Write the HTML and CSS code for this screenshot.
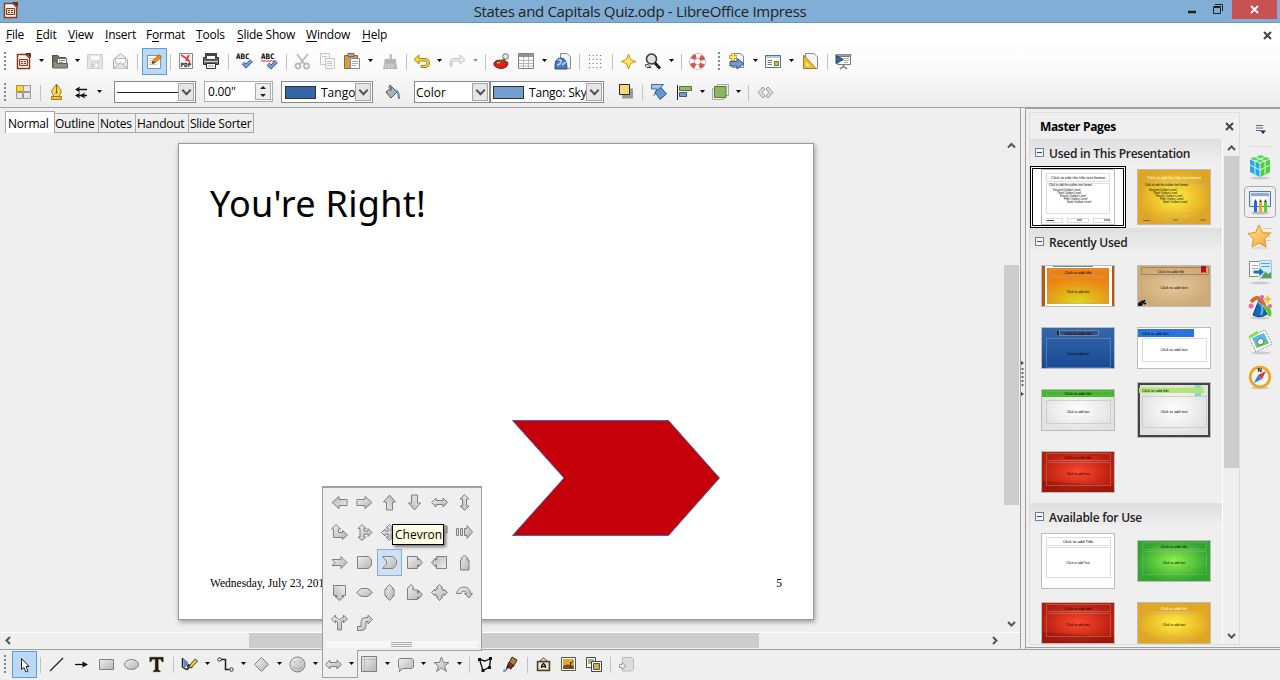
FILE: index.html
```html
<!DOCTYPE html>
<html lang="en">
<head>
<meta charset="utf-8">
<title>States and Capitals Quiz.odp - LibreOffice Impress</title>
<link rel="stylesheet" href="styles.css">
</head>
<body>
<svg class="defs" width="0" height="0">
  <defs>
    <linearGradient id="gg" x1="0" y1="0" x2="1" y2="1"><stop offset="0" stop-color="#f0f0f0"/><stop offset="1" stop-color="#b4b4b4"/></linearGradient>
    <radialGradient id="orange" cx=".5" cy=".95" r=".7"><stop offset="0" stop-color="#d8d820"/><stop offset="1" stop-color="#ee8010"/></radialGradient>
    <radialGradient id="yellow"><stop offset="0" stop-color="#ffee44"/><stop offset="1" stop-color="#e2a51c"/></radialGradient>
    <radialGradient id="red"><stop offset="0" stop-color="#fa4a30"/><stop offset="1" stop-color="#b81c0c"/></radialGradient>
    <radialGradient id="green"><stop offset="0" stop-color="#90f050"/><stop offset="1" stop-color="#2fa62e"/></radialGradient>
    <radialGradient id="tan"><stop offset="0" stop-color="#e2c79c"/><stop offset="1" stop-color="#cfab74"/></radialGradient>
    <linearGradient id="blue" x1="0" y1="0" x2="0" y2="1"><stop offset="0" stop-color="#3468ac"/><stop offset="1" stop-color="#174a92"/></linearGradient>
    <radialGradient id="pale"><stop offset="0" stop-color="#fff"/><stop offset="1" stop-color="#e2e2e2"/></radialGradient>
    <linearGradient id="gold" x1="0" y1="0" x2="1" y2="1"><stop offset="0" stop-color="#ffe79a"/><stop offset="1" stop-color="#f0a52a"/></linearGradient>
    <symbol id="arrow" viewBox="0 0 19 19"><path d="M2 6.500H10V3.500L17 9.500 10 15.500V12.500H2z"/></symbol>
    <symbol id="double" viewBox="0 0 19 19"><path d="M1.500 9.500L6 5V7.500H13V5L17.500 9.500 13 14V11.500H6V14z"/></symbol>
    <symbol id="callout" viewBox="0 0 19 19"><path d="M2.500 3.500H12.500V7H13.500V5L17.500 9.500 13.500 14V12H12.500V15.500H2.500z"/></symbol>
    <symbol id="odp" viewBox="0 0 19 19"><path d="M3.500 2.500H12L15.500 6V16.500H3.500z" fill="#fff" stroke="#8a3a1c" stroke-width="1.500"/><path d="M11 1H17V6z" fill="#7a2c10"/><path d="M5.500 7.500H13.500V13.500H5.500z" fill="#f3d9c8" stroke="#8a3a1c"/><path d="M7 9.500H9M10 9.500H12M7 11.500H9M10 11.500H12" stroke="#8a3a1c"/></symbol>
  </defs>
</svg>

<header class="titlebar">
  <svg class="appicon" width="19" height="19"><use href="#odp"/></svg>
  <h1>States and Capitals Quiz.odp - LibreOffice Impress</h1>
  <div class="winbtns">
    <svg width="68" height="19"><path d="M12 12H20" stroke="#222" stroke-width="2.500"/><path d="M37.500 7.500H44.500V13.500H37.500z" fill="none" stroke="#222"/><path d="M37 6.500H45M39 4.500H46.500V11" fill="none" stroke="#222"/></svg>
    <span class="close"><svg width="9" height="9"><path d="M1 1L8 8M8 1L1 8" stroke="#fff" stroke-width="1.800"/></svg></span>
  </div>
</header>

<section class="top">
  <nav class="menubar">
    <span style="width:30px"><u>F</u>ile</span><span style="width:32px"><u>E</u>dit</span><span style="width:37px"><u>V</u>iew</span><span style="width:41px"><u>I</u>nsert</span><span style="width:50px">F<u>o</u>rmat</span><span style="width:41px"><u>T</u>ools</span><span style="width:69px"><u>S</u>lide Show</span><span style="width:56px"><u>W</u>indow</span><span><u>H</u>elp</span>
    <svg class="docclose" width="9" height="9"><path d="M1 1L8 8M8 1L1 8" stroke="#444" stroke-width="2"/></svg>
  </nav>

  <div class="toolbar">
    <i class="grip"></i>
    <i class="b"><svg><use href="#odp"/></svg></i><i class="d"></i>
    <i class="b"><svg><path d="M2.500 3.500H8L9.500 5.500H15.500V15.500H2.500z" fill="#6b7265" stroke="#4c5148"/><path d="M7.500 6.500H16.500V13.500H7.500z" fill="#f4f4ee" stroke="#6b7265"/><path d="M9 8.500H15M9 10.500H13" stroke="#8b917f"/><path d="M3 16V9.500H6L7 11.500H17.500V16z" fill="#8c9482" stroke="#5d6457"/></svg></i><i class="d"></i>
    <i class="b dim"><svg><path d="M1.500 2.500H16.500V16.500H1.500z" fill="#e4e4e4" stroke="#c6c6c6"/><path d="M4 3H14V9H4z" fill="#fafafa" stroke="#d0d0d0"/><path d="M5.500 11H12.500V16H5.500z" fill="#f8f8f8" stroke="#c6c6c6"/><path d="M7.500 12V15" stroke="#bbb" stroke-width="2"/></svg></i>
    <i class="b"><svg><path d="M2.500 7.500L9.500 1.500 16.500 7.500V16.500H2.500z" fill="#eee" stroke="#aaa"/><path d="M4.500 6.500H14.500V10.500L9.500 13.500 4.500 10.500z" fill="#fff" stroke="#bbb"/><path d="M2.500 16.500L9.500 10.500 16.500 16.500" fill="#e3e3e3" stroke="#aaa"/></svg></i>
    <i class="s w9"></i>
    <i class="b on"><svg><path d="M2.500 3.500H15.500V16.500H2.500z" fill="#fff" stroke="#8a8f98"/><path d="M4 6.500H11M4 8.500H9M4 10.500H8M4 12.500H12" stroke="#c8c8c8"/><path d="M7 11.500L8 8.500 14 2.500 16.500 5 10 11z" fill="#f08a1c" stroke="#a85b14" stroke-width=".8"/><path d="M7 11.500L8 8.800 9.500 10.800z" fill="#333"/></svg></i>
    <i class="s w7"></i>
    <i class="b"><svg><path d="M2.500 1.500H15.500V16.500H2.500z" fill="#f8f8f8" stroke="#888"/><path d="M4 3Q10 6 13 10M12 3L9 9" fill="none" stroke="#e33" stroke-width="1.800"/><text x="3.500" y="15" class="pdf">PDF</text></svg></i>
    <i class="b"><svg><path d="M3 1H15V6H3z" fill="#444"/><path d="M1.500 5.500H16.500V12.500H1.500z" fill="#666" stroke="#333"/><path d="M4.500 3.500H13.500V7.500H4.500z" fill="#fff" stroke="#444"/><path d="M2 9.500H16" stroke="#cfcfcf"/><path d="M4.500 11.500H13.500V16.500H4.500z" fill="#fff" stroke="#333"/><path d="M6 14H12" stroke="#999"/></svg></i>
    <i class="s"></i>
    <i class="b"><svg><text x="1" y="7" class="abc">ABC</text><path d="M8 11L11 14 16.500 8.500" fill="none" stroke="#254f88" stroke-width="3.600"/><path d="M8 11L11 14 16.500 8.500" fill="none" stroke="#7ba4da" stroke-width="2"/></svg></i>
    <i class="b"><svg><text x="1" y="7" class="abc">ABC</text><path d="M1 9.500L2.500 8.500 4 9.500 5.500 8.500 7 9.500 8.500 8.500 10 9.500 11.500 8.500 13 9.500 14.500 8.500" fill="none" stroke="#e02020"/><path d="M8 12L11 15 16.500 9.500" fill="none" stroke="#254f88" stroke-width="3.600"/><path d="M8 12L11 15 16.500 9.500" fill="none" stroke="#7ba4da" stroke-width="2"/></svg></i>
    <i class="s"></i>
    <i class="b dim"><svg fill="none" stroke="#b0b0b0" stroke-width="1.800"><path d="M4 2L11.500 12M15 2L7 12"/><circle cx="5" cy="14" r="2.500"/><circle cx="13.500" cy="14" r="2.500"/></svg></i>
    <i class="b dim"><svg fill="#f7f7f7" stroke="#bcbcbc"><path d="M2.500 1.500H11.500V12.500H2.500z"/><path d="M7.500 6.500H16.500V16.500H7.500z"/><path d="M4 4.500H9M9 9.500H14M9 11.500H14M9 13.500H14"/></svg></i>
    <i class="b"><svg><path d="M1.500 3.500H14.500V16.500H1.500z" fill="#d49c52" stroke="#93662a"/><path d="M5 1.500H11V4.500H5z" fill="#aaa" stroke="#666"/><path d="M7.500 6.500H16.500V16.500H7.500z" fill="#fff" stroke="#888"/><path d="M9 9.500H15M9 11.500H15M9 13.500H13" stroke="#aaa"/></svg></i><i class="d"></i>
    <i class="b m2"><svg><path d="M8.500 2H11V7H8.500z" fill="#c0c0c0"/><path d="M4 7.500H14.500V10H4zM4 10L2.500 16.500H16L14.500 10z" fill="#bcbcbc" stroke="#aaa" stroke-width=".8"/><path d="M5 12V16M8 12V16M11 12V16" stroke="#ddd"/></svg></i>
    <i class="s w6"></i>
    <i class="b"><svg><path d="M7 3L2 7.500 7 12V9H13Q15 9 15 11T13 13.500H9V15.500H14Q17.500 15 17.500 11T13 6.500H7z" fill="#f6d64a" stroke="#a8820c"/></svg></i><i class="d"></i>
    <i class="b"><svg><path d="M12 3L17 7.500 12 12V9H6Q4 9 4 11V14H2V11Q2 6.500 6 6.500H12z" fill="#ececec" stroke="#c4c4c4"/></svg></i><i class="d grey"></i>
    <i class="s"></i>
    <i class="b"><svg><circle cx="13.500" cy="4.500" r="3" fill="#ccc" stroke="#888"/><circle cx="13.500" cy="4.500" r="1.200" fill="#fff"/><path d="M2 11Q4 7 8 8.500 11 7 16 10.500 16 16 9 16.500 1 15.500 2 11z" fill="#d8201c" stroke="#8b100e"/><path d="M7 8Q10 10 13 7" fill="none" stroke="#357a24" stroke-width="2"/><path d="M5 11Q7 10 8 11" stroke="#fff" fill="none"/></svg></i>
    <i class="b"><svg><path d="M1.500 1.500H16.500V16.500H1.500z" fill="#fff" stroke="#80857a"/><path d="M2 2H16V5H2z" fill="#90968a"/><path d="M2 8.500H16M2 11.500H16M2 14H16M6.500 5V16M11.500 5V16" stroke="#b4b8ae"/></svg></i><i class="d"></i>
    <i class="b"><svg><path d="M7.500 1.500H14L17.500 5V16.500H7.500z" fill="#f5f5f5" stroke="#888"/><path d="M2 17Q1 6 8 6 14 6 14 17z" fill="#4b7ab6" stroke="#244f85"/><path d="M5 8Q9 7 8 10T4 13M9 13L13 10" fill="none" stroke="#a9c9ec" stroke-width="1.800"/></svg></i>
    <i class="s"></i>
    <i class="b"><svg><path d="M3 3.500H17M3 7.500H17M3 11.500H17M3 15.500H17" stroke="#666" stroke-dasharray="1 2.700"/></svg></i>
    <i class="s"></i>
    <i class="b"><svg><path d="M9.500 2L11.500 7.500 17 9.500 11.500 11.500 9.500 17 7.500 11.500 2 9.500 7.500 7.500z" fill="#ffe566" stroke="#c09a10"/></svg></i>
    <i class="b"><svg><circle cx="7.500" cy="7" r="5" fill="#dce4ea" stroke="#333" stroke-width="1.500"/><path d="M11 11L16 16.500" stroke="#222" stroke-width="3"/><path d="M1 13Q4 11 7 15.500H3z" fill="#eee" stroke="#333"/></svg></i><i class="d"></i>
    <i class="s"></i>
    <i class="b"><svg fill="none"><circle cx="9.500" cy="9.500" r="5.500" stroke="#999" stroke-width="5.500"/><circle cx="9.500" cy="9.500" r="5.500" stroke="#fff" stroke-width="4.400"/><circle cx="9.500" cy="9.500" r="5.500" stroke="#e05048" stroke-width="4.500" stroke-dasharray="4.320 4.320" stroke-dashoffset="-2.160"/></svg></i>
    <i class="grip mid"></i>
    <i class="b"><svg><path d="M4.500 1.500H12L15.500 4V15.500H4.500z" fill="#f4f4f4" stroke="#888"/><path d="M2 9.500H9V6.500L16 11.500 9 17V14H2z" fill="#6f9bd0" stroke="#2c578c"/><path d="M5 1V9M1 5H9" stroke="#b18d0a" stroke-width="3.600"/><path d="M5 1.500V8.500M1.500 5H8.500" stroke="#ffe766" stroke-width="2"/></svg></i><i class="d"></i>
    <i class="b"><svg><path d="M1.500 3.500H16.500V15.500H1.500z" fill="#fff" stroke="#4973a6"/><path d="M2 4H16V6H2z" fill="#b7cbe3"/><path d="M3.500 8.500H8M3.500 10.500H8M3.500 12.500H8" stroke="#777"/><path d="M10.500 9.500H14.500V13.500H10.500z" fill="#c5c34c" stroke="#71711c"/></svg></i><i class="d"></i>
    <i class="b m1"><svg><path d="M4.500 1.500H13L16.500 5V16.500H4.500z" fill="#f5f5f5" stroke="#888"/><path d="M2.500 3L15 16.500H2.500z" fill="#eebc35" stroke="#a87e12"/><path d="M5 10L9 14H5z" fill="#fff0b8"/></svg></i>
    <i class="s"></i>
    <i class="b"><svg><path d="M2 2.500H17V4H2z" fill="#bbb" stroke="#777" stroke-width=".8"/><path d="M3.500 4.500H16.500V12.500H3.500z" fill="#fff" stroke="#777"/><path d="M10 6.500H15M10 8.500H15M10 10.500H14" stroke="#aaa"/><path d="M2 3.500L9.500 7.500 2 11.500z" fill="#37659f" stroke="#234a7c"/><path d="M9.500 13V15M6 17L9.500 14.500 13 17" fill="none" stroke="#777" stroke-width="1.500"/></svg></i>
  </div>

  <div class="toolbar second">
    <i class="grip"></i>
    <i class="b"><svg stroke="#999"><path d="M2.500 2.500H9.500V8.500H2.500z" fill="#f5d742" stroke="#b19312"/><path d="M9.500 2.500H16.500V8.500H9.500zM2.500 9.500H8.500V15.500H2.500zM9.500 9.500H16.500V15.500H9.500z" fill="#e6e6e6"/></svg></i>
    <i class="s"></i>
    <i class="b"><svg><path d="M9.500 1L14.500 8 12 14H7L4.500 8z" fill="#f8d954" stroke="#a7800f"/><path d="M9.500 2V9" stroke="#7a5e0c"/><circle cx="9.500" cy="9.500" r="1" fill="#554"/><path d="M4.500 13.500H14.500V16.500H4.500z" fill="#f0c53a" stroke="#9c7a16"/></svg></i>
    <i class="b"><svg><path d="M5 6.500H15M5 12.500H15" stroke="#111" stroke-width="1.300"/><path d="M3 6.500L8 3.500 7 6.500 8 9.500zM3 12.500L8 9.500 7 12.500 8 15.500zM8 12.500L13 9.500 12 12.500 13 15.500z" fill="#111"/></svg></i><i class="d"></i>
    <div class="combo line"><span class="rule"></span><b></b></div>
    <div class="spin"><span>0.00"</span><b></b></div>
    <div class="combo fill1"><em></em><span>Tango: Blue</span><b></b></div>
    <i class="b bucket"><svg><path d="M3 9L9 4 14 9 8 15z" fill="#aeb3b2" stroke="#4d5453"/><path d="M8 8V2.500Q6 1 6 5" fill="none" stroke="#555"/><path d="M11 7Q16 7 16 16" fill="none" stroke="#688dc0" stroke-width="2.200"/></svg></i>
    <div class="combo kind"><span>Color</span><b></b></div>
    <div class="combo fill2"><em></em><span>Tango: Sky Blue</span><b></b></div>
    <i class="b shadow"><svg><path d="M6 5.500H17V15.500H6z" fill="#999"/><path d="M3.500 1.500H13.500V11.500H3.500z" fill="#f5d77c" stroke="#332b14"/></svg></i>
    <i class="s w9"></i>
    <i class="b"><svg><path d="M1.500 1.500H13.500L4 12.500 7 6H1.500z" fill="#a9c3e2" stroke="#3d6da5"/><path d="M5 9L11 4.500 16.500 11 10 16.500z" fill="#6794cd" stroke="#2a5894"/></svg></i>
    <i class="b"><svg><path d="M2.500 2V17" stroke="#222"/><path d="M4.500 3.500H16.500V7.500H4.500z" fill="#90b86a" stroke="#4e7a2e"/><path d="M4.500 9.500H11.500V13.500H4.500z" fill="#8099b8" stroke="#39577c"/></svg></i><i class="d"></i>
    <i class="b"><svg><path d="M6.500 1.500H17.500V12.500H6.500z" fill="#eee" stroke="#aaa"/><path d="M1.500 5.500H12.500V16.500H1.500z" fill="#eee" stroke="#aaa"/><path d="M3.500 3.500H15V14.500H3.500z" fill="#8cb565" stroke="#517e30"/></svg></i><i class="d"></i>
    <i class="s w9"></i>
    <i class="b"><svg fill="#ddd" stroke="#999"><path d="M7 4L2 9.500 7 15 9 13 6 9.500 9 6z"/><path d="M12 4L17 9.500 12 15 10 13 13 9.500 10 6z"/></svg></i>
  </div>
</section>

<main class="main">
  <section class="work">
    <div class="tabs"><span class="active">Normal</span><span style="width:44px">Outline</span><span style="width:37px">Notes</span><span style="width:53px">Handout</span><span style="width:65px">Slide Sorter</span></div>
    <div class="canvasrow">
      <div class="canvas">
        <article class="slide">
          <h2>You're Right!</h2>
          <svg class="shape" width="210" height="118"><path d="M.5 1.500H156.500L207.500 59 156.500 116.500H.5L52 59z" fill="#c5000b" stroke="#4a6698"/></svg>
          <footer><span>Wednesday, July 23, 2014</span><span>5</span></footer>
        </article>
      </div>
      <div class="vscroll"><svg width="15" height="16"><path d="M4 10.500L7.500 7 11 10.500" class="chev"/></svg><i></i><svg width="15" height="16"><path d="M4 6L7.500 9.500 11 6" class="chev"/></svg></div>
    </div>
    <div class="hscroll"><svg width="16" height="15"><path d="M10 4L6.500 7.500 10 11" class="chev"/></svg><i></i><svg width="16" height="15"><path d="M6 4L9.500 7.500 6 11" class="chev"/></svg></div>
  </section>

  <div class="splitter"><svg width="4" height="38"><path d="M0 1L3 3 0 5zM0 32L3 34 0 36z" fill="#444"/><path d="M1.500 8V28" stroke="#666" stroke-width="2" stroke-dasharray="2 2"/></svg></div>

  <aside class="sidebar">
    <div class="panel">
      <div class="phead"><b>Master Pages</b><svg width="9" height="9"><path d="M1 1L8 8M8 1L1 8" stroke="#444" stroke-width="2"/></svg></div>
      <div class="pbody">
        <div class="lists">
          <h3><i></i>Used in This Presentation</h3>
          <div class="used">
            <div class="pick"><svg class="th" viewBox="0 0 74 56" height="56"><rect width="74" height="56" fill="#fff"/><g class="fr"><path d="M5.500 4.500H68.500V12.500H5.500zM5.500 14.500H68.500V44.500H5.500zM5.500 49.500H21.500V53.500H5.500zM26.500 49.500H47.500V53.500H26.500zM52.500 49.500H68.500V53.500H52.500z"/></g><text x="10" y="10" textLength="54">Click to edit the title text format</text><g class="o"><text x="8" y="17" textLength="43">Click to edit the outline text format</text><text x="12" y="21.500">Second Outline Level</text><text x="16" y="25">Third Outline Level</text><text x="19" y="28">Fourth Outline Level</text><text x="23" y="31">Fifth Outline Level</text><text x="26" y="34">Sixth Outline Level</text></g><path d="M6 51.500H13M36 51H41M63 51H69" stroke="#444"/></svg></div>
            <svg class="th" viewBox="0 0 74 56" height="56"><rect width="74" height="56" fill="url(#yellow)"/><g class="fr"><path d="M5.500 4.500H68.500V12.500H5.500zM5.500 14.500H68.500V44.500H5.500zM5.500 49.500H21.500V53.500H5.500zM26.500 49.500H47.500V53.500H26.500zM52.500 49.500H68.500V53.500H52.500z"/></g><text x="10" y="10" fill="#fff" textLength="54">Click to edit the title text format</text><g class="o"><text x="8" y="17" textLength="43">Click to edit the outline text format</text><text x="12" y="21.500">Second Outline Level</text><text x="16" y="25">Third Outline Level</text><text x="19" y="28">Fourth Outline Level</text><text x="23" y="31">Fifth Outline Level</text><text x="26" y="34">Sixth Outline Level</text></g><path d="M6 51.500H13M36 51H41M63 51H69" stroke="#764"/></svg>
          </div>
          <h3><i></i>Recently Used</h3>
          <div class="grid recent">
            <svg class="th" viewBox="0 0 74 42" height="42"><rect width="74" height="42" fill="#b45a14"/><rect x="4" y="1" width="67" height="40" fill="#fff"/><path d="M12 1H52" stroke="#5699a5" stroke-width="2"/><rect x="6" y="3" width="62" height="36" fill="url(#orange)"/><path class="fr" d="M8.500 4.500H65.500V10.500H8.500zM8.500 12.500H65.500V38.500H8.500z"/><text x="37" y="8.500" class="c">Click to add title</text><text x="37" y="28" class="c s">Click to add text</text></svg>
            <svg class="th" viewBox="0 0 74 42" height="42"><rect width="74" height="42" fill="url(#tan)"/><path d="M4.500 2.500H71.500V9.500H4.500z" fill="none" stroke="#a67d65"/><path class="fr" d="M4.500 11.500H71.500V34.500H4.500z"/><path d="M64 1H69V8L66.500 7 64 8z" fill="#b80e22"/><path d="M1 39.500L3 37.500 5 39.500 3 41zM4 36L6 38 8 35M7 39L9 38" fill="#101020" stroke="#101020" stroke-width="1.500"/><text x="34" y="7.500" class="c">Click to add title</text><text x="37" y="24" class="c">Click to add text</text></svg>
            <svg class="th" viewBox="0 0 74 42" height="42"><rect width="74" height="42" fill="url(#blue)"/><path d="M18.500 3.500H57.500V8.500H18.500z" fill="#35507b" stroke="#6b84a8"/><path d="M16 4H18V8H16z" fill="#162845"/><path class="fr" d="M5.500 11.500H69.500V40.500H5.500z"/><text x="37" y="7.500" class="c">Click to add title</text><text x="37" y="28" class="c s">Click to add text</text></svg>
            <svg class="th" viewBox="0 0 74 42" height="42"><rect width="74" height="42" fill="#fff"/><rect y="2" width="57" height="8" fill="#2d73dc"/><path class="fr" d="M5.500 11.500H69.500V34.500H5.500z"/><text x="5" y="7.500">Click to add title</text><text x="37" y="24" class="c">Click to add text</text></svg>
            <svg class="th" viewBox="0 0 74 42" height="42"><rect width="74" height="42" fill="url(#pale)"/><rect width="74" height="8" fill="#40b827"/><path class="fr" d="M5.500 2.500H69.500V6.500H5.500zM5.500 11.500H69.500V34.500H5.500z"/><text x="37" y="6" class="c">Click to add title</text><text x="37" y="24" class="c s">Click to add text</text></svg>
            <svg class="th" viewBox="0 0 74 56" height="56"><rect x="1.500" y="1.500" width="71" height="53" fill="url(#pale)" stroke="#444" stroke-width="3"/><rect x="58" y="3" width="6" height="11" fill="#83d2dc"/><rect x="2" y="5.500" width="65" height="5.500" fill="#b2e575"/><path class="fr" d="M5.500 14.500H69.500V45.500H5.500z"/><text x="5" y="9.500">Click to add title</text><text x="37" y="31" class="c">Click to add text</text></svg>
            <svg class="th" viewBox="0 0 74 42" height="42"><rect width="74" height="42" fill="url(#red)"/><path d="M0 30L74 35V42H0z" fill="#841408" opacity=".45"/><path class="fr" d="M5.500 2.500H69.500V9.500H5.500zM5.500 11.500H69.500V34.500H5.500z"/><text x="37" y="7.500" class="c">Click to add title</text><text x="37" y="24" class="c s">Click to add text</text></svg>
          </div>
          <h3><i></i>Available for Use</h3>
          <div class="grid avail">
            <svg class="th" viewBox="0 0 74 56" height="56"><rect width="74" height="56" fill="#fff"/><path class="fr" d="M5.500 4.500H69.500V12.500H5.500zM5.500 14.500H69.500V44.500H5.500z"/><text x="37" y="10" class="c big">Click to add Title</text><text x="37" y="31" class="c s">Click to add Text</text></svg>
            <svg class="th" viewBox="0 0 74 42" height="42"><rect width="74" height="42" fill="url(#green)"/><path class="fr" d="M5.500 2.500H69.500V9.500H5.500zM5.500 11.500H69.500V34.500H5.500z"/><text x="37" y="7.500" class="c">Click to add title</text><text x="37" y="24" class="c s">Click to add text</text></svg>
            <svg class="th" viewBox="0 0 74 42" height="42"><rect width="74" height="42" fill="url(#red)"/><path d="M0 30L74 35V42H0z" fill="#841408" opacity=".45"/><path class="fr" d="M5.500 2.500H69.500V9.500H5.500zM5.500 11.500H69.500V34.500H5.500z"/><text x="37" y="7.500" class="c">Click to add title</text><text x="37" y="24" class="c s">Click to add text</text></svg>
            <svg class="th" viewBox="0 0 74 42" height="42"><rect width="74" height="42" fill="url(#yellow)"/><rect x="5" y="2" width="64" height="7" fill="#e8a816"/><path class="fr" d="M5.500 2.500H69.500V9.500H5.500zM5.500 11.500H69.500V34.500H5.500z"/><text x="37" y="7.500" class="c" fill="#fff">Click to add title</text><text x="37" y="24" class="c s">Click to add text</text></svg>
          </div>
        </div>
        <div class="pscroll"><svg width="15" height="17"><path d="M4 11L7.500 7.500 11 11" class="chev"/></svg><i></i><svg width="15" height="16"><path d="M4 6L7.500 9.500 11 6" class="chev"/></svg></div>
      </div>
    </div>
    <div class="deck">
      <svg class="menuicon" width="12" height="12"><path d="M1 1.500H8M1 4H8M1 6.500H6" stroke="#58688a"/><path d="M5 6.500H11L8 10z" fill="#182b50"/></svg>
      <hr>
      <span><svg><ellipse cx="15" cy="26" rx="10" ry="1.500" fill="#ccc"/><path d="M15 3L25 7V20L15 25 5 20V7z" fill="#24a7ef"/><path d="M15 3L25 7 15 11 5 7z" fill="#58d848"/><path d="M15 11L25 7V20L15 25z" fill="#4dd03a"/><path d="M15 3L10 5 20 9V22M5 13L15 18 25 13M10 9V22M20 5L10 9M15 11V25M5 7L15 11 25 7" stroke="#eafaff" fill="none" stroke-width=".9"/></svg></span>
      <span class="sel"><svg><ellipse cx="15" cy="26" rx="9" ry="1.500" fill="#bbb"/><path d="M4.500 4.500H25.500V19.500H4.500z" fill="#dce9f8" stroke="#5576ac"/><path d="M6 6H24V9H6z" fill="#8fa9d2"/><path d="M7 10H23V18H7z" fill="#fff"/><path d="M10.500 15V25" stroke="#2166dd" stroke-width="3"/><path d="M15.500 15V25" stroke="#f5a416" stroke-width="3"/><path d="M20.500 15V25" stroke="#55d12a" stroke-width="3"/><path d="M9 15L10.500 12 12 15M14 15L15.500 12 17 15M19 15L20.500 12 22 15" fill="#444"/></svg></span>
      <span><svg><ellipse cx="15" cy="26" rx="9" ry="1.500" fill="#ddd"/><path d="M18 6.500H27M20 10.500H27M20 14.500H26M20 18.500H26" stroke="#f1c583"/><path d="M14 3L17.500 10.500 25 11.500 19.500 17 21 25 14 21 7 25 8.500 17 3 11.500 10.500 10.500z" fill="url(#gold)" stroke="#dc9228"/></svg></span>
      <span><svg><ellipse cx="15" cy="26" rx="10" ry="1.500" fill="#ccc"/><path d="M4.500 4.500H14.500V19.500H4.500z" fill="#fff" stroke="#888"/><path d="M7 8.500H13M7 11.500H13" stroke="#aaa"/><path d="M14.500 3.500H26.500V21.500H14.500z" fill="#d5ebff" stroke="#9fc4e8"/><path d="M16 21L20 14 23 17 26 15V21z" fill="#5d9f4c"/><path d="M16 6.500H25M16 9.500H25" stroke="#59a0df"/><path d="M8 13H14V9.500L19.500 15 14 20.500V17H8z" fill="#1475c4" stroke="#fff"/></svg></span>
      <span><svg><ellipse cx="15" cy="26" rx="10" ry="1.500" fill="#ccc"/><path d="M8 23L14 8 22 22Q15 27 8 23z" fill="#1467b8" stroke="#0a4076"/><path d="M13 10Q20 14 16 23" stroke="#62b4f0" stroke-width="2" fill="none"/><path d="M6 10Q12 3 16 8T19 14" fill="none" stroke="#df6a26" stroke-width="4"/><path d="M19 15Q26 17 24 24" stroke="#60c834" stroke-width="4" fill="none"/><path d="M23 3L24 6 27 7 24 9 23 12 21 9 18 7 21 6z" fill="#fabd30"/><circle cx="6" cy="14" r="2.500" fill="#f265bb"/><circle cx="17" cy="5" r="2" fill="#c964dc"/><circle cx="25" cy="14" r="2" fill="#ef64a0"/></svg></span>
      <span><svg><ellipse cx="16" cy="26" rx="10" ry="1.500" fill="#ccc"/><path d="M4 10L20 3 27 17 11 25z" fill="#fff" stroke="#999" stroke-dasharray="2 1"/><path d="M7 11L19 6 24 16 12 21z" fill="#53b9ee"/><path d="M10 18L15 12 18 16 21 13 24 16 12 21z" fill="#78c83c"/><path d="M12 15L15 11 19 13 18 17 14 18z" fill="#f6f6f6" stroke="#468" stroke-width=".8"/><path d="M5 10L13 5" stroke="#83e63c" stroke-width="3"/></svg></span>
      <span><svg><ellipse cx="15" cy="26" rx="9" ry="1.500" fill="#ccc"/><circle cx="15" cy="15" r="9.800" fill="#eef4f8" stroke="#f1a51e" stroke-width="2.800"/><path d="M21 9L17 17 13 13z" fill="#e52e2e"/><path d="M9 21L13 13 17 17z" fill="#2e83df"/><text x="12.500" y="10" class="north">N</text></svg></span>
    </div>
  </aside>
</main>

<footer class="toolbar bottom">
  <i class="grip"></i>
  <i class="b on m1"><svg><path d="M6.500 3.500V14.500L9 12.500 11 17 13 16 11 11.500H14z" fill="#fff" stroke="#222"/></svg></i>
  <i class="s w7"></i>
  <i class="b"><svg><path d="M3 16L16 3" stroke="#222" stroke-width="1.200"/></svg></i>
  <i class="b"><svg><path d="M3 9.500H12" stroke="#111" stroke-width="1.300"/><path d="M10.500 6.500L16 9.500 10.500 12.500z" fill="#111"/></svg></i>
  <i class="b g"><svg><path d="M2.500 4.500H16.500V14.500H2.500z"/></svg></i>
  <i class="b g"><svg><ellipse cx="9.500" cy="9.500" rx="7" ry="5"/></svg></i>
  <i class="b"><svg><path d="M2.500 2H16.500V7H15L13.500 4.500H11.500V14.500L13.500 16V17H6V16L8 14.500V4.500H5.500L4 7H2.500z" fill="#1c1c1c" stroke="#b99d50" stroke-width=".5"/></svg></i>
  <i class="s"></i>
  <i class="b"><svg><path d="M2.500 3V12Q9 17 8 12T12 13" fill="none" stroke="#222" stroke-width="1.500"/><path d="M3 3L8 7V10L4 13z" fill="#5f90b5"/><path d="M9 13L10 10 15 4 17.500 6 12 12z" fill="#f3c84d" stroke="#5a4415"/></svg></i><i class="d"></i>
  <i class="b"><svg fill="none" stroke="#222"><path d="M5 4.500H9.500V14.500H13.500" stroke-width="1.500"/><circle cx="3.500" cy="4.500" r="1.700" fill="#fff"/><circle cx="15.500" cy="14.500" r="1.700" fill="#fff"/></svg></i><i class="d"></i>
  <i class="b g"><svg><path d="M9.500 2.500L16.500 9.500 9.500 16.500 2.500 9.500z"/></svg></i><i class="d"></i>
  <i class="b g"><svg><circle cx="9.500" cy="9.500" r="7.500"/><path d="M6.500 6V8M12.500 6V8M5 11.500Q9.500 16 14 11.500" fill="none" stroke="#aaa"/></svg></i><i class="d"></i>
  <div class="opened">
    <i class="b g"><svg><use href="#double"/></svg></i><i class="d"></i>
    <div class="popup">
      <div class="shapes g">
        <svg><use href="#arrow" transform="rotate(180 9.500 9.500)"/></svg>
        <svg><use href="#arrow"/></svg>
        <svg><use href="#arrow" transform="rotate(-90 9.500 9.500)"/></svg>
        <svg><use href="#arrow" transform="rotate(90 9.500 9.500)"/></svg>
        <svg><use href="#double"/></svg>
        <svg><use href="#double" transform="rotate(90 9.500 9.500)"/></svg>
        <svg><path d="M6 1.500L10.500 6H8.500V9.500H12.500V7.500L17.500 12 12.500 16.500V14.500H3.500V6H1.500z"/></svg>
        <svg><path d="M7 1.500L11 5.500H9V8H13V5.500L17 9.500 13 13.500V11H9V14H11L7 17.500 3 14H5V5.500H3z"/></svg>
        <svg><path d="M9.500 1.500L13 5H11V8H14V6L17.500 9.500 14 13V11H11V14H13L9.500 17.500 6 14H8V11H5V13L1.500 9.500 5 6V8H8V5H6z"/></svg>
        <svg><path d="M2 12H8V6H6L9.500 2 13 6H11V15H2z"/></svg>
        <svg><path d="M3 3H17V10H9V14L3 9z"/></svg>
        <svg><path d="M1.500 5.500H3.500V12.500H1.500zM5.500 5.500H7.500V12.500H5.500zM9.500 5.500H12V2.500L17.500 9 12 15.500V12.500H9.500z"/></svg>
        <svg><path d="M2 6.500H11V3.500L17 9.500 11 15.500V12.500H2L5 9.500z"/></svg>
        <svg><path d="M2.500 3.500H13.500L16.500 7V12L13.500 15.500H2.500z"/></svg>
        <svg class="hot"><path d="M2.500 3.500H13L16.500 7.500V11.500L13 15.500H2.500L6.500 11V8z"/></svg>
        <svg><use href="#callout"/></svg>
        <svg><use href="#callout" transform="rotate(180 9.500 9.500)"/></svg>
        <svg><path d="M5.500 17V7H7V5.500H6L9.500 2 13 5.500H12V7H14V17z"/></svg>
        <svg><use href="#callout" transform="rotate(90 9.500 9.500)"/></svg>
        <svg><path d="M1.500 9.500L5 6.500V7L6 5.500H13L14 7V6.500L17.500 9.500 14 12.500V12L13 13.500H6L5 12V12.500z"/></svg>
        <svg><path d="M9.500 1.500L12.500 4.500V6H14V13H12.500V14.500L9.500 17.500 6.500 14.500V13H5V6H6.500V4.500z"/></svg>
        <svg><path d="M6 1.500L9 5H8V7H12.500V10H13.500V7.500L17.500 11.500 13.500 16V14H12.500V16.500H2.500V5H3z"/></svg>
        <svg><path d="M9.500 1.500L12.500 4.500H11.500V6H13V7.500H14.500V6.500L17.500 9.500 14.500 12.500V11.500H13V13H11.500V14.500H12.500L9.500 17.500 6.500 14.500H7.500V13H6V11.500H4.500V12.500L1.500 9.500 4.500 6.500V7.500H6V6H7.500V4.500H6.500z"/></svg>
        <svg><path d="M1.500 10.500Q3 4 9 4 15 4 15.500 10.500H17.500L14 15 9.500 10.500H11.500Q11 8 9 8 6.500 8 6 10.500z"/></svg>
        <svg><path d="M1.500 6L5.500 2V4.500H7L9.500 7 12 4.500H13.500V2L17.500 6 13.500 10V7.500L11.500 9V17H7.500V9L5.500 7.500V10z"/></svg>
        <svg><path d="M2.500 17.500H7Q11 17 11 13V8.500H13V11L17.500 6.500 13 2V4.500H10Q6 5 6 9V13.500H2.500z"/></svg>
      </div>
      <div class="tear"><i></i></div>
      <div class="tip">Chevron</div>
    </div>
  </div>
  <i class="b g"><svg><path d="M1.500 1.500H16.500V16.500H1.500z"/><path d="M2 4.500H16M4.500 2V16" stroke="#bbb"/></svg></i><i class="d"></i>
  <i class="b g"><svg><path d="M3.500 3.500H16L17.500 5V12L16 13.500H7L3 16.500 4 13.500 2.500 12V5z"/></svg></i><i class="d"></i>
  <i class="b g"><svg><path d="M9.500 2L11.500 7.500H17L12.500 11 14.500 16.500 9.500 13 4.500 16.500 6.500 11 2 7.500H7.500z"/></svg></i><i class="d"></i>
  <i class="s"></i>
  <i class="b"><svg><path d="M3.500 4.500L9 6 14.500 3.500 13.500 12 7 15.500z" fill="none" stroke="#111" stroke-width="1.300"/><path d="M2 3H5V6H2zM13 2H16V5H13zM12 11H15V14H12zM5.500 14H8.500V17H5.500z" fill="#111"/></svg></i>
  <i class="b"><svg><path d="M11 2L16 5 12 12 7 10z" fill="#b18435" stroke="#322817"/><path d="M8 7L12 10 10 14 6 12z" fill="#a82e24" stroke="#321"/><path d="M10 10L7 13 4 17 6 11z" fill="#222"/><path d="M3 13L5 17H2z" fill="#6b9ad0"/></svg></i>
  <i class="s"></i>
  <i class="b"><svg><path d="M6 6L9.500 3 13 6" fill="none" stroke="#333"/><path d="M3.500 6.500H15.500V15.500H3.500z" fill="#dccba6" stroke="#4e4128" stroke-width="1.500"/><path d="M5.500 8.500H13.500V13.500H5.500z" fill="#fff"/><path d="M7.500 13V10.500L9.500 8.500 11.500 10.500V13M8 11.500H11" fill="none" stroke="#111" stroke-width="1.300"/></svg></i>
  <i class="b"><svg><path d="M2.500 2.500H16.500V15.500H2.500z" fill="#fff" stroke="#555"/><path d="M4 4H15V14H4z" fill="#e7a52c"/><path d="M4 11Q8 8 15 11V14H4z" fill="#735126"/><path d="M11.500 13V7M11.500 9L14 6" stroke="#332"/></svg></i>
  <i class="b"><svg><path d="M2.500 2.500H11.500V12.500H2.500z" fill="#fff" stroke="#444"/><path d="M4 4H10V9H4z" fill="#a7b67b"/><path d="M7.500 6.500H17.500V16.500H7.500z" fill="#fff" stroke="#444"/><path d="M9.500 8.500H15.500V14.500H9.500z" fill="#d5b03b" stroke="#555"/></svg></i>
  <i class="s"></i>
  <i class="b"><svg><path d="M5.500 2.500H15L16.500 4V14.500L15 16H5.500z" fill="#ddd" stroke="#bbb"/><path d="M2.500 9.500H5V7.500L9 11 5 14.500V12.500H2.500z" fill="#eee" stroke="#999"/></svg></i>
</footer>
</body>
</html>
```
FILE: styles.css
```css
*, *::before, *::after { box-sizing: border-box; }
body { margin: 0; width: 1280px; height: 680px; overflow: hidden; background: #efefef; color: #000; font: 12px/16px "Open Sans", "Noto Sans", sans-serif; display: flex; flex-direction: column; }
.defs { position: absolute; }
i, em { font-style: normal; }
svg { display: block; flex: none; }

.titlebar { flex: none; height: 23px; background: #81aed5; border-bottom: 1px solid #6c96b9; display: grid; grid-template-columns: 210px 1fr 210px; }
.appicon { margin: 1px 0 0 1px; }
.titlebar h1 { margin: 0; font-size: 15px; line-height: 23px; font-weight: 400; text-align: center; color: #222; letter-spacing: -.32px; white-space: nowrap; }
.winbtns { display: flex; padding-left: 106px; }
.close { width: 45px; height: 19px; margin-left: -12px; flex: none; background: #c75050; display: grid; place-items: center; }

.top { flex: none; height: 85px; background: linear-gradient(#fff 20%, #f9f9f9 60%, #ececec); border-bottom: 1px solid #a0a0a0; }
.menubar { height: 24px; padding-left: 6px; display: flex; align-items: center; letter-spacing: -.22px; white-space: nowrap; margin-bottom: 1px; }
.menubar u { text-underline-offset: 2px; }
.docclose { margin: 0 8px 0 auto; }
.toolbar { display: flex; height: 27px; }
.second { margin-top: 4px; }
.grip { flex: none; width: 11px; height: 20px; margin-top: 4px; background: repeating-linear-gradient(#888 0 2px, transparent 2px 4px) 4px 0 / 2px 100% no-repeat; }
.grip.mid { width: 15px; background-position: 8px 0; }
.b { flex: none; width: 25px; height: 27px; padding: 4px 3px; }
.b svg, .shapes svg { width: 19px; height: 19px; overflow: visible; }
.b.on { padding: 3px 2px; background: #b9d9f7; border: 1px solid #5c9ddd; }
.dim { opacity: .85; }
.d { flex: none; width: 11px; padding: 11px 0 0 3px; }
.d::before { content: ""; display: block; width: 5px; height: 3px; background: #000; clip-path: polygon(0 0, 100% 0, 50% 100%); }
.d.grey::before { background: #999; }
.s { flex: none; width: 8px; height: 16px; margin-top: 6px; background: linear-gradient(#c2c2c2, #c2c2c2) center / 1px 100% no-repeat; }
.w6 { width: 6px; } .w7 { width: 7px; } .w9 { width: 9px; }
.m1 { margin-left: 1px; } .m2 { margin-left: 2px; }
.pdf { font: bold 6px "DejaVu Sans Mono", monospace; }
.abc { font: bold 7.500px "DejaVu Sans Mono", monospace; }

.combo, .spin { flex: none; height: 22px; margin-top: 2px; background: #fff; border: 1px solid #858990; display: flex; align-items: center; overflow: hidden; white-space: nowrap; }
.combo span { flex: 1; min-width: 0; overflow: hidden; padding-left: 2px; position: relative; top: 1px; }
.combo b { flex: none; width: 16px; height: 18px; margin-right: 1px; border: 1px solid #a5a5a5; background: #e6e6e6; display: grid; place-items: center; }
.combo b::before { content: ""; width: 7px; height: 7px; border: solid #555; border-width: 0 2px 2px 0; transform: translateY(-2px) rotate(45deg); }
.combo em { flex: none; width: 31px; height: 13px; margin: 0 3px; border: 1px solid #333; background: #3465a4; }
.line { width: 82px; margin-left: 9px; }
.line .rule { height: 1px; padding: 0; margin-left: 2px; background: #222; top: 0; }
.spin { width: 69px; margin-left: 8px; height: 21px; border-color: #abadb3; padding-left: 3px; letter-spacing: -.2px; }
.spin b { width: 16px; height: 17px; margin: 0 1px 0 auto; border: 1px solid #aaa; background: #eee; display: flex; flex-direction: column; align-items: center; justify-content: space-around; }
.spin b::before, .spin b::after { content: ""; border: 3px solid transparent; border-top: 0; border-bottom: 3px solid #222; }
.spin b::after { border-top: 3px solid #222; border-bottom: 0; }
.fill1 { width: 92px; margin-left: 8px; }
.bucket { margin-left: 7px; }
.kind { width: 76px; margin-left: 9px; }
.kind span { padding-left: 1px; }
.fill2 { width: 114px; letter-spacing: -.2px; }
.fill2 em { background: #729fcf; margin-left: 2px; }
.shadow { margin-left: 9px; }

.main { flex: none; height: 541px; display: flex; }
.work { width: 1020px; display: flex; flex-direction: column; }
.tabs { flex: none; height: 29px; padding: 3px 0 4px 5px; display: flex; align-items: flex-end; letter-spacing: -.25px; }
.tabs span { height: 20px; line-height: 20px; border: 1px solid #a8a8a8; border-left: 0; white-space: nowrap; padding-left: 1px; }
.tabs span:nth-child(2) { padding-left: 0; }
.tabs .active { width: 50px; height: 22px; line-height: 23px; background: #fff; border-left: 1px solid #a8a8a8; border-bottom: 0; padding-left: 2px; }
.canvasrow { height: 495px; display: flex; }
.canvas { width: 1004px; padding: 6px 0 0 178px; }
.slide { width: 636px; height: 477px; background: #fff; border: 1px solid #999; box-shadow: 1px 2px 5px #999; padding: 37px 30px 0 31px; display: flex; flex-direction: column; }
.slide h2 { margin: 0; font: 36px/46px "Noto Sans", sans-serif; letter-spacing: .3px; white-space: nowrap; }
.shape { margin: 192px 0 0 333px; }
.slide .shape { margin-left: 302px; }
.slide footer { margin-top: 38px; padding-right: 1px; display: flex; justify-content: space-between; font: 11.500px/16px "Liberation Serif", serif; }
.chev { fill: none; stroke: #555; stroke-width: 2; }
.vscroll { width: 15px; display: flex; flex-direction: column; }
.vscroll i { height: 240px; margin: 112px 0 111px; background: #cdcdcd; }
.hscroll { height: 17px; border-top: 1px solid #fff; display: flex; }
.hscroll i { width: 510px; height: 15px; margin: 0 228px 0 233px; background: #cdcdcd; }
.splitter { width: 6px; border: solid #a0a0a0; border-width: 0 1px; display: flex; align-items: center; }
.sidebar { width: 254px; height: 540px; border: solid #a0a0a0; border-width: 1px 0; padding: 3px 0 3px 3px; display: flex; }
.panel { width: 211px; height: 533px; border: 1px solid #dedede; }
.phead { height: 26px; padding: 1px 5px 0 10px; display: flex; align-items: center; justify-content: space-between; letter-spacing: -.35px; }
.pbody { height: 505px; display: flex; }
.lists { width: 192px; height: 505px; overflow: hidden; }
.lists h3 { margin: 0; height: 24px; padding: 5px 0 0 4px; display: flex; align-items: center; font-size: 12px; line-height: 18px; font-weight: 600; color: #222; background: linear-gradient(#dfdfdf, #efefef); white-space: nowrap; letter-spacing: -.26px; }
.lists h3 i { width: 9px; height: 9px; margin: -2px 5px 0 1px; border: 1px solid #66819b; background: linear-gradient(#444, #444) center / 5px 1px no-repeat #f4f8fc; }
.th { width: 74px; outline: 1px solid #bbb; outline-offset: -1px; }
.th text { font: 3.800px "Liberation Sans", sans-serif; }
.th .c { text-anchor: middle; }
.th .s { font-size: 3.200px; }
.th .big { font-size: 4.200px; }
.th .o text { font-size: 2.900px; }
.fr, .fr path { fill: none; stroke: #aaa; stroke-opacity: .5; stroke-width: .8; }
.used { display: flex; height: 65px; align-items: flex-start; padding-top: 3px; }
.used > .th { margin: 3px 0 0 11px; }
.pick { width: 96px; height: 62px; border: 1px solid #000; padding: 2px 10px; background: #fff; box-shadow: inset 0 0 0 1px #fff, inset 0 0 0 2px #000; }
.grid { display: grid; grid-template-columns: 96px 96px; padding-left: 11px; align-items: center; }
.recent { height: 251px; grid-template-rows: repeat(4, 62px); padding-top: 3px; }
.avail { grid-template-rows: 68px 56px; }
.pscroll { width: 17px; padding-left: 1px; border-left: 1px solid #fff; }
.pscroll i { display: block; height: 312px; margin-bottom: 160px; background: #cdcdcd; }
.deck { width: 40px; padding: 13px 0 0 4px; }
.menuicon { margin: -1px 0 10px 11px; }
.deck hr { width: 24px; height: 1px; margin: 0 0 4px 5px; border: 0; background: #ddd; }
.deck span { width: 32px; height: 32px; margin-bottom: 3px; display: grid; place-items: center; border-radius: 4px; }
.deck span svg { width: 30px; height: 30px; }
.deck .sel { border: 1px solid #aaa; }
.north { font: bold 6px "Liberation Sans", sans-serif; }

.bottom { flex: none; height: 31px; border-top: 1px solid #a0a0a0; padding-top: 1px; }
.bottom .grip { width: 12px; }
.bottom .on { margin-left: 0; }
.g svg { fill: url(#gg); stroke: #808080; stroke-width: 1; }
.opened { position: relative; display: flex; width: 36px; height: 27px; margin: 0 -1px 0 1px; border: 1px solid #a0a0a0; border-top: 0; }
.opened > .b { margin-left: -2px; }
.popup { position: absolute; left: -1px; bottom: 26px; width: 160px; height: 165px; border: 1px solid #a0a0a0; border-top-width: 2px; background: #efefef; }
.popup::after { content: ""; position: absolute; left: 0; bottom: -1px; width: 34px; height: 1px; background: #efefef; }
.shapes { display: grid; grid-template-columns: repeat(6, 25px); grid-template-rows: repeat(5, 30px); margin-top: -1px; padding-left: 4px; place-items: center; }
.shapes svg { width: 25px; height: 27px; padding: 4px 3px; }
.shapes .hot { background: #cfe0f3; outline: 1px solid #82aee0; outline-offset: -1px; }
.tear { height: 7px; margin: 4px 4px 0 3px; background: #f7f7f7; display: grid; place-items: center; }
.tear i { width: 21px; height: 5px; border: solid #aaa; border-width: 1px 0; background: linear-gradient(#aaa, #aaa) center / 100% 1px no-repeat; }
.tip { position: absolute; left: 69px; top: 36px; width: 52px; height: 21px; border: 1px solid #000; background: #ffffe1; box-shadow: 2px 2px 3px #777; padding-left: 2px; line-height: 20px; }
```
